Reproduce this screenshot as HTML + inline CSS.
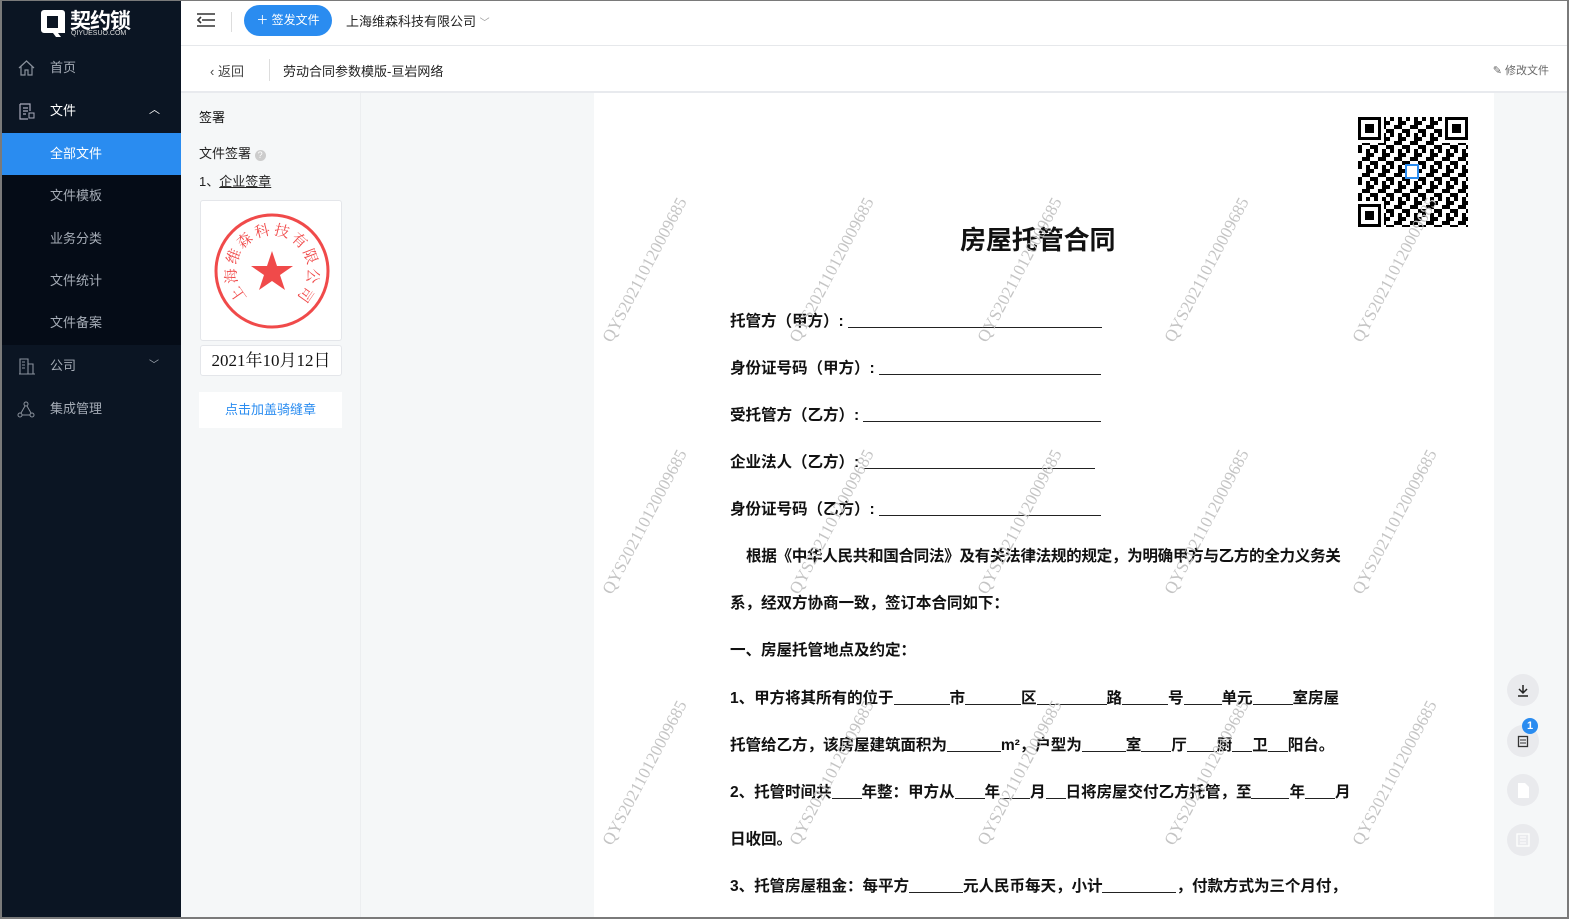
<!DOCTYPE html>
<html><head><meta charset="utf-8"><style>
*{margin:0;padding:0;box-sizing:border-box}
body{width:1569px;height:919px;overflow:hidden;font-family:"Liberation Sans","Noto Sans CJK SC",sans-serif;background:#fff;position:relative}
.frame{position:absolute;inset:0;border:2px solid #7a7a7a;border-top-width:1px}
.side{position:absolute;left:2px;top:1px;width:179px;height:916px;background:#0b1523}
.logo{position:absolute;left:38px;top:4px;color:#fff}
.mi{position:absolute;left:0;width:179px;height:42px;line-height:42px;color:#a5acb6;font-size:13px;padding-left:48px}
.sub{background:#050c17}
.act{background:#2a8cf0;color:#fff}
.top{position:absolute;left:181px;top:1px;right:2px;height:45px;border-bottom:1px solid #e6e8eb;background:#fff}
.hdr{position:absolute;left:181px;top:47px;right:2px;height:46px;border-bottom:2px solid #e8eaee;background:#fff}
.lp{position:absolute;left:181px;top:93px;width:180px;bottom:2px;background:#f5f7f8;border-right:1px solid #eceef0}
.gray{position:absolute;left:361px;top:93px;width:233px;bottom:2px;background:#f5f7f8}
.doc{position:absolute;left:594px;top:93px;width:900px;bottom:2px;background:#fff}
.rp{position:absolute;left:1494px;top:93px;right:2px;bottom:2px;background:#f5f7f8}
.l{position:absolute;left:730px;font-size:15.6px;color:#111;font-weight:bold;white-space:nowrap;letter-spacing:-0.1px}
.u{display:inline-block;border-bottom:1px solid #222;height:16px;vertical-align:-2px}
.wm{position:absolute;font-family:"Liberation Serif",serif;font-size:17px;color:#c4c4c4;transform:rotate(-62deg);white-space:nowrap;width:170px;text-align:center}
.cb{position:absolute;left:1507px;width:32px;height:32px;border-radius:50%;background:#e9eaed}
</style></head><body>
<div class="side">
 <div class="logo"><svg width="28" height="32" viewBox="0 0 28 32" style="position:absolute;left:0;top:3px"><path d="M4 2h18a3 3 0 0 1 3 3v20h-7l3 4h-5l-3-4H4a3 3 0 0 1-3-3V5a3 3 0 0 1 3-3zM7 8v12h11V8z" fill="#fff"/></svg>
 <div style="position:absolute;left:30px;top:0;font-size:21px;font-weight:bold;width:80px;letter-spacing:-1px">契约锁</div>
 <div style="position:absolute;left:31px;top:25px;font-size:7px;color:#ddd;width:80px">QIYUESUO.COM</div></div>
 <div class="mi" style="top:46px"><svg style="position:absolute;left:16px;top:13px" width="17" height="16" viewBox="0 0 17 16"><path d="M1 8L8.5 1 16 8M3 6v9h4v-5h3v5h4V6" fill="none" stroke="#8a919c" stroke-width="1.2"/></svg>首页</div>
 <div class="mi" style="top:89px;color:#fff"><svg style="position:absolute;left:17px;top:13px" width="16" height="17" viewBox="0 0 16 17"><path d="M1 1h10v7M1 1v15h8M4 5h5M4 8h5M4 11h3" fill="none" stroke="#aab" stroke-width="1.2"/><rect x="10" y="10" width="5" height="5" fill="none" stroke="#aab"/></svg>文件<span style="position:absolute;left:147px;top:-1px;font-size:11px">︿</span></div>
 <div class="mi act" style="top:132px">全部文件</div>
 <div class="mi sub" style="top:174px;height:43px">文件模板</div>
 <div class="mi sub" style="top:217px">业务分类</div>
 <div class="mi sub" style="top:259px">文件统计</div>
 <div class="mi sub" style="top:301px;height:43px">文件备案</div>
 <div class="mi" style="top:344px"><svg style="position:absolute;left:17px;top:13px" width="16" height="17" viewBox="0 0 16 17"><path d="M1 16V1h8v15M9 6h5v10M0 16h16M3 4h3M3 7h3M3 10h3" fill="none" stroke="#8a919c" stroke-width="1.1"/></svg>公司<span style="position:absolute;left:147px;top:0;font-size:10px">﹀</span></div>
 <div class="mi" style="top:387px"><svg style="position:absolute;left:15px;top:13px" width="18" height="17" viewBox="0 0 18 17"><circle cx="9" cy="3" r="2" fill="none" stroke="#8a919c"/><circle cx="3" cy="14" r="2" fill="none" stroke="#8a919c"/><circle cx="15" cy="14" r="2" fill="none" stroke="#8a919c"/><path d="M8 5l-4 7M10 5l4 7M5 14h8" stroke="#8a919c"/></svg>集成管理</div>
</div>
<div class="top">
 <svg style="position:absolute;left:16px;top:12px" width="18" height="14" viewBox="0 0 18 14"><path d="M0 1h18M5 7h13M0 13h18M4 4L1 7l3 3" fill="none" stroke="#333" stroke-width="1.6"/></svg>
 <div style="position:absolute;left:50px;top:11px;width:1px;height:20px;background:#ddd"></div>
 <div style="position:absolute;left:63px;top:4px;width:88px;height:31px;border-radius:16px;background:#2a8cf0;color:#fff;font-size:12px;line-height:31px;text-align:center">＋ 签发文件</div>
 <div style="position:absolute;left:165px;top:10px;font-size:13px;color:#222">上海维森科技有限公司 <span style="color:#999;font-size:10px">﹀</span></div>
</div>
<div class="hdr">
 <div style="position:absolute;left:29px;top:14px;font-size:13px;color:#444">‹ 返回</div>
 <div style="position:absolute;left:88px;top:12px;width:1px;height:22px;background:#ddd"></div>
 <div style="position:absolute;left:102px;top:14px;font-size:13px;color:#222">劳动合同参数模版-亘岩网络</div>
 <div style="position:absolute;right:18px;top:15px;font-size:11px;color:#666">✎ 修改文件</div>
</div>
<div class="lp">
 <div style="position:absolute;left:18px;top:14px;font-size:13px;color:#111">签署</div>
 <div style="position:absolute;left:18px;top:50px;font-size:13px;color:#222">文件签署 <span style="display:inline-block;width:11px;height:11px;border-radius:50%;background:#ccc;color:#fff;font-size:9px;line-height:11px;text-align:center;vertical-align:0">?</span></div>
 <div style="position:absolute;left:18px;top:78px;font-size:13px;color:#222">1、<u>企业签章</u></div>
 <div style="position:absolute;left:19px;top:107px;width:142px;height:141px;background:#fff;border:1px solid #e4e6ea;border-radius:3px">
  <svg width="140" height="140" viewBox="0 0 140 140">
   <circle cx="71" cy="70" r="56" fill="none" stroke="#f04a4a" stroke-width="3"/>
   <polygon points="71,50 76,65 92,65 79,74 84,89 71,80 58,89 63,74 50,65 66,65" fill="#f04a4a"/>
   <g font-family="Noto Serif CJK SC,serif" font-size="15" fill="#f04a4a" text-anchor="middle">
    <text x="71" y="34" transform="rotate(-125 71 70)">上</text>
    <text x="71" y="34" transform="rotate(-97 71 70)">海</text>
    <text x="71" y="34" transform="rotate(-69 71 70)">维</text>
    <text x="71" y="34" transform="rotate(-42 71 70)">森</text>
    <text x="71" y="34" transform="rotate(-14 71 70)">科</text>
    <text x="71" y="34" transform="rotate(14 71 70)">技</text>
    <text x="71" y="34" transform="rotate(42 71 70)">有</text>
    <text x="71" y="34" transform="rotate(69 71 70)">限</text>
    <text x="71" y="34" transform="rotate(97 71 70)">公</text>
    <text x="71" y="34" transform="rotate(125 71 70)">司</text>
   </g></svg>
 </div>
 <div style="position:absolute;left:19px;top:252px;width:142px;height:31px;background:#fff;border:1px solid #e4e6ea;border-radius:3px;font-family:'Liberation Serif','Noto Serif CJK SC',serif;font-size:17px;line-height:29px;text-align:center;color:#111">2021年10月12日</div>
 <div style="position:absolute;left:18px;top:299px;width:143px;height:36px;background:#fff;font-size:13px;color:#2a8cf0;text-align:center;line-height:36px">点击加盖骑缝章</div>
</div>
<div class="gray"></div>
<div class="doc">
 <svg style="position:absolute;left:764px;top:24px" width="110" height="110" viewBox="0 0 110 110">
  <defs><pattern id="qr" width="16" height="16" patternUnits="userSpaceOnUse"><rect width="4" height="4" fill="#000"/><rect x="8" y="0" width="4" height="8" fill="#000"/><rect x="4" y="8" width="8" height="4" fill="#000"/><rect x="12" y="4" width="4" height="4" fill="#000"/><rect x="0" y="12" width="4" height="4" fill="#000"/><rect x="12" y="12" width="4" height="4" fill="#000"/></pattern></defs>
  <rect width="110" height="110" fill="url(#qr)"/>
  <g fill="#fff"><rect width="26" height="26"/><rect x="84" width="26" height="26"/><rect y="84" width="26" height="26"/></g>
  <g fill="none" stroke="#000" stroke-width="3"><rect x="1.5" y="1.5" width="20" height="20"/><rect x="88.5" y="1.5" width="20" height="20"/><rect x="1.5" y="88.5" width="20" height="20"/></g>
  <g fill="#000"><rect x="7" y="7" width="9" height="9"/><rect x="94" y="7" width="9" height="9"/><rect x="7" y="94" width="9" height="9"/></g>
  <rect x="48" y="48" width="12" height="13" fill="#fff" stroke="#2a8cf0" stroke-width="2"/>
 </svg>
</div>
<div class="l" style="top:220px;left:960px;font-size:26px">房屋托管合同</div>
<div class="l" style="top:309px">托管方（甲方）: <span class="u" style="width:254px"></span></div>
<div class="l" style="top:356px">身份证号码（甲方）: <span class="u" style="width:222px"></span></div>
<div class="l" style="top:403px">受托管方（乙方）: <span class="u" style="width:238px"></span></div>
<div class="l" style="top:450px">企业法人（乙方）: <span class="u" style="width:232px"></span></div>
<div class="l" style="top:497px">身份证号码（乙方）: <span class="u" style="width:222px"></span></div>
<div class="l" style="top:544px;left:746px;letter-spacing:-0.35px">根据《中华人民共和国合同法》及有关法律法规的规定，为明确甲方与乙方的全力义务关</div>
<div class="l" style="top:591px">系，经双方协商一致，签订本合同如下：</div>
<div class="l" style="top:638px">一、房屋托管地点及约定：</div>
<div class="l" style="top:686px">1、甲方将其所有的位于<span class="u" style="width:56px"></span>市<span class="u" style="width:56px"></span>区<span class="u" style="width:70px"></span>路<span class="u" style="width:46px"></span>号<span class="u" style="width:38px"></span>单元<span class="u" style="width:40px"></span>室房屋</div>
<div class="l" style="top:733px">托管给乙方，该房屋建筑面积为<span class="u" style="width:54px"></span>m²，户型为<span class="u" style="width:44px"></span>室<span class="u" style="width:30px"></span>厅<span class="u" style="width:30px"></span>厨<span class="u" style="width:20px"></span>卫<span class="u" style="width:20px"></span>阳台。</div>
<div class="l" style="top:780px">2、托管时间共<span class="u" style="width:30px"></span>年整：甲方从<span class="u" style="width:30px"></span>年<span class="u" style="width:30px"></span>月<span class="u" style="width:20px"></span>日将房屋交付乙方托管，至<span class="u" style="width:38px"></span>年<span class="u" style="width:30px"></span>月</div>
<div class="l" style="top:827px">日收回。</div>
<div class="l" style="top:874px">3、托管房屋租金：每平方<span class="u" style="width:54px"></span>元人民币每天，小计<span class="u" style="width:74px"></span>，付款方式为三个月付，</div>
<div class="wm" style="left:560px;top:260px">QYS202110120009685</div>
<div class="wm" style="left:747px;top:260px">QYS202110120009685</div>
<div class="wm" style="left:935px;top:260px">QYS202110120009685</div>
<div class="wm" style="left:1122px;top:260px">QYS202110120009685</div>
<div class="wm" style="left:1310px;top:260px">QYS202110120009685</div>
<div class="wm" style="left:560px;top:512px">QYS202110120009685</div>
<div class="wm" style="left:747px;top:512px">QYS202110120009685</div>
<div class="wm" style="left:935px;top:512px">QYS202110120009685</div>
<div class="wm" style="left:1122px;top:512px">QYS202110120009685</div>
<div class="wm" style="left:1310px;top:512px">QYS202110120009685</div>
<div class="wm" style="left:560px;top:763px">QYS202110120009685</div>
<div class="wm" style="left:747px;top:763px">QYS202110120009685</div>
<div class="wm" style="left:935px;top:763px">QYS202110120009685</div>
<div class="wm" style="left:1122px;top:763px">QYS202110120009685</div>
<div class="wm" style="left:1310px;top:763px">QYS202110120009685</div>
<div class="rp"></div>
<div class="cb" style="top:674px"><svg width="32" height="32" viewBox="0 0 32 32"><path d="M16 11v8M12 15l4 4 4-4M11 22h10" fill="none" stroke="#222" stroke-width="1.5"/></svg></div>
<div class="cb" style="top:725px"><svg width="32" height="32" viewBox="0 0 32 32"><rect x="11.5" y="11.5" width="9" height="10" fill="none" stroke="#333" stroke-width="1.3"/><path d="M13 15h6M13 18h6" stroke="#333"/></svg></div>
<div style="position:absolute;left:1522px;top:718px;width:16px;height:16px;border-radius:50%;background:#2a8cf0;color:#fff;font-size:11px;font-weight:bold;text-align:center;line-height:16px">1</div>
<div class="cb" style="top:774px"><svg width="32" height="32" viewBox="0 0 32 32"><path d="M11 9h7l4 4v11H11z" fill="#fff"/></svg></div>
<div class="cb" style="top:824px"><svg width="32" height="32" viewBox="0 0 32 32"><rect x="10" y="10" width="12" height="12" fill="none" stroke="#fff" stroke-width="1.3"/><path d="M13 13h6M13 16h6M13 19h6" stroke="#fff"/></svg></div>
<div class="frame"></div>
</body></html>
